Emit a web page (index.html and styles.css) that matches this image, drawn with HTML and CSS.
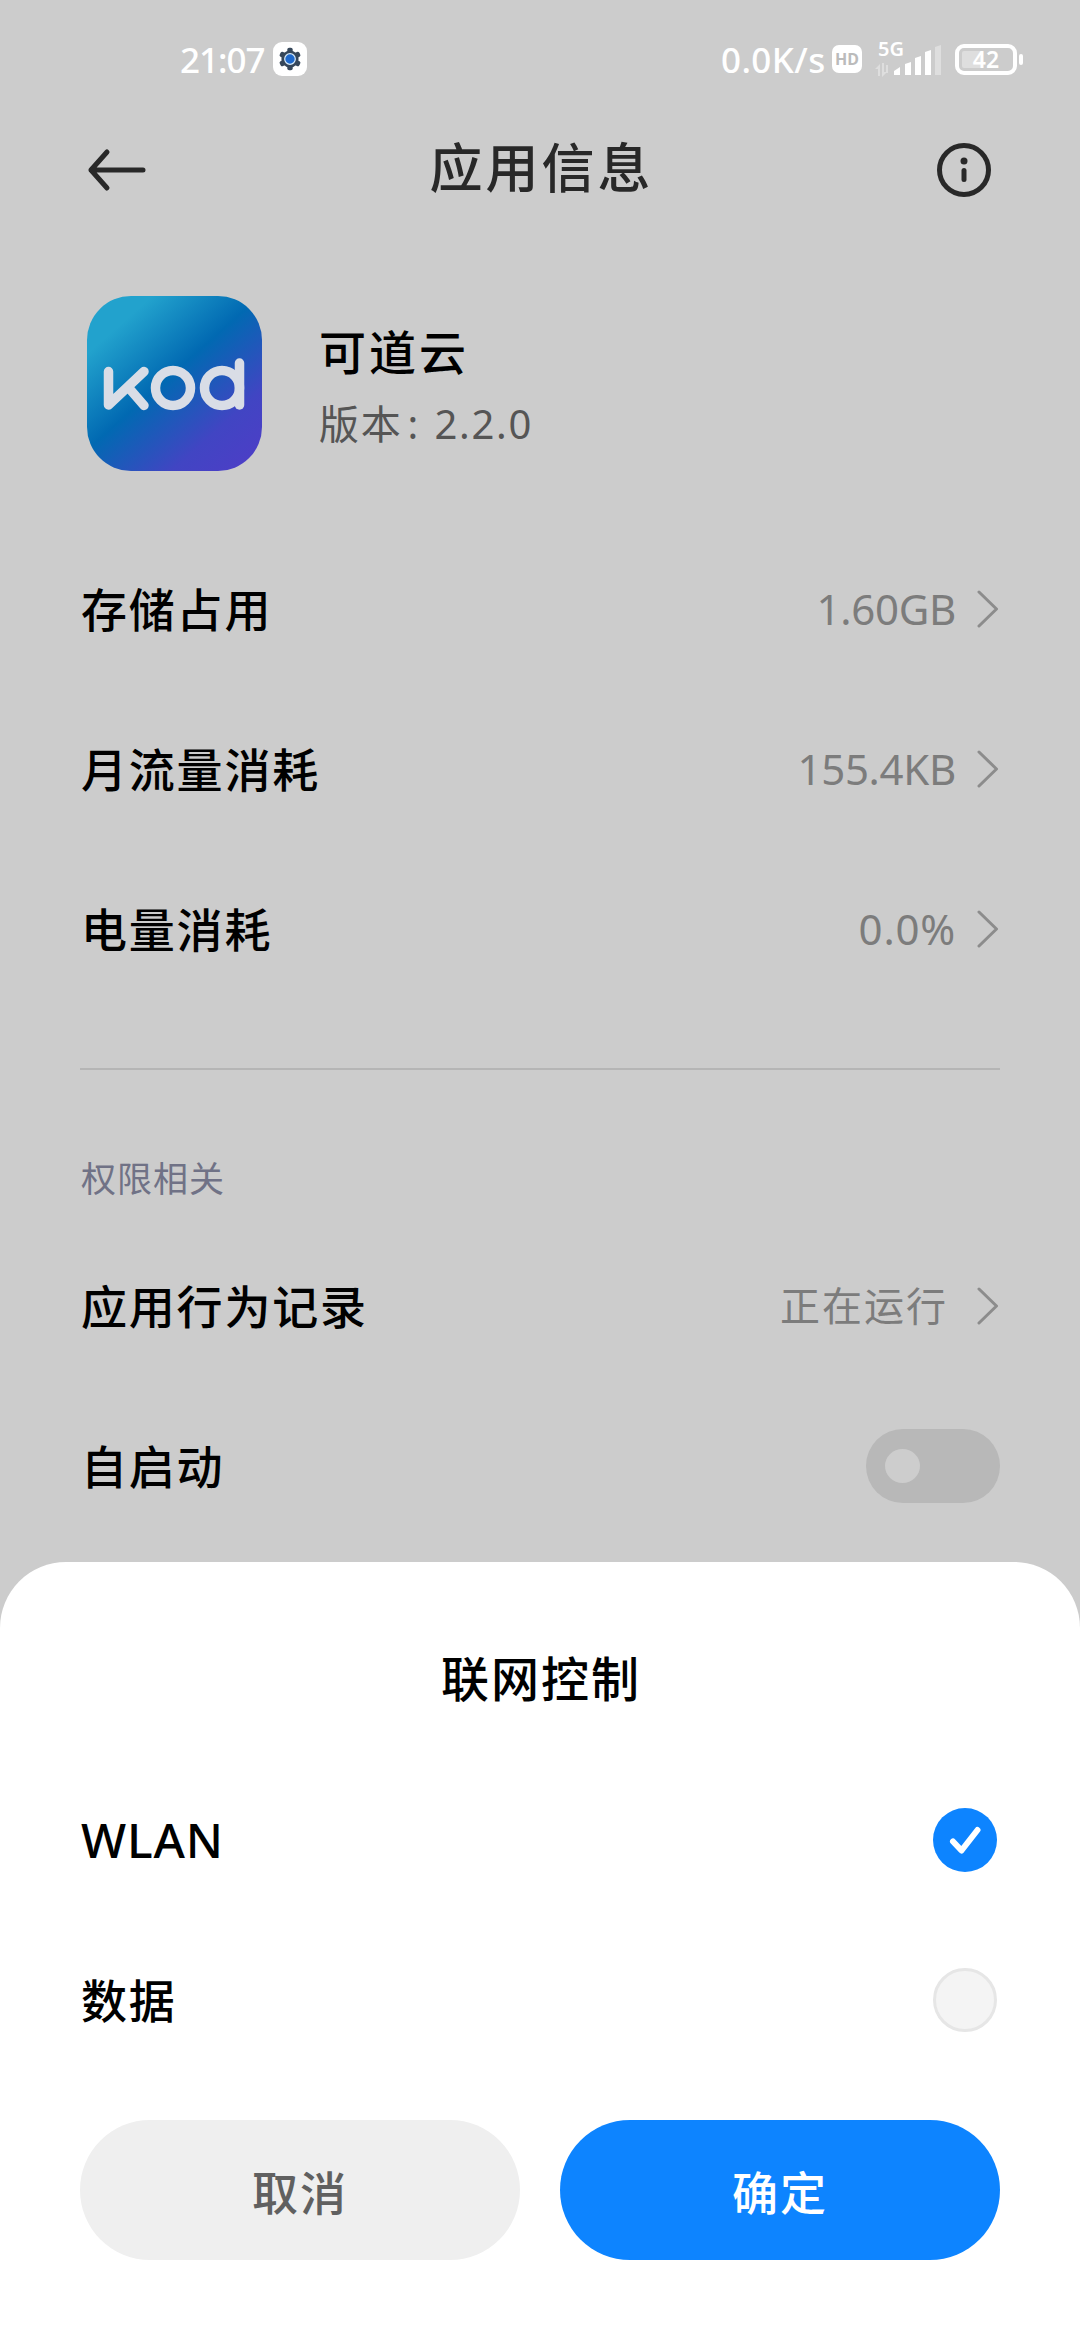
FILE: index.html
```html
<!DOCTYPE html>
<html lang="zh-CN">
<head>
<meta charset="utf-8">
<title>应用信息</title>
<link rel="stylesheet" href="styles.css">
</head>
<body>
<div class="screen">
  <header class="status">
    <div class="status-left">
      <span class="clock">21:07</span>
      <svg class="gear" viewBox="0 0 34 34">
        <rect width="34" height="34" rx="9" fill="#fff"/>
        <g fill="#36475a">
          <circle cx="17" cy="17" r="8.6"/>
          <rect x="14.3" y="5.8" width="5.4" height="22.4" rx="1.8"/>
          <rect x="14.3" y="5.8" width="5.4" height="22.4" rx="1.8" transform="rotate(60 17 17)"/>
          <rect x="14.3" y="5.8" width="5.4" height="22.4" rx="1.8" transform="rotate(120 17 17)"/>
        </g>
        <circle cx="17" cy="17" r="5.3" fill="#1f69cc" stroke="#d8ecfb" stroke-width="1.2"/>
      </svg>
    </div>
    <div class="status-right">
      <span class="speed">0.0K/s</span>
      <span class="hd">HD</span>
      <div class="signal">
        <span class="net">5G</span>
        <svg class="bars" viewBox="0 0 68 32">
          <g fill="#dedede"><path d="M1 24l5-5v12H4v-7zM8 18h2v9h3l-5 5zM12 20h2v8h-2z"/><path d="M61 2l6-2v30h-6z"/></g>
          <g fill="#fff"><path d="M20 30v-4l6-4v8zM31 30V19l6-2v13zM41 30V13l6-2v19zM51 30V7l6-2v25z"/></g>
        </svg>
      </div>
      <div class="battery"><span class="level">42</span></div>
      <span class="nub"></span>
    </div>
  </header>

  <nav class="titlebar">
    <svg class="back" viewBox="0 0 60 44"><path d="M56 22H4M20 4L4 22l16 18" fill="none" stroke="#282828" stroke-width="5" stroke-linecap="round" stroke-linejoin="round"/></svg>
    <h1 class="title">应用信息</h1>
    <svg class="info" viewBox="0 0 54 54"><circle cx="27" cy="27" r="24.5" fill="none" stroke="#282828" stroke-width="5"/><circle cx="27" cy="18" r="3.5" fill="#282828"/><path d="M27 27.500v9" stroke="#282828" stroke-width="5" stroke-linecap="round"/></svg>
  </nav>

  <section class="app">
    <svg class="logo" viewBox="0 0 175 175" role="img" aria-label="kod">
      <defs><linearGradient id="sky" x1="0.1" y1="0.05" x2="0.9" y2="0.95"><stop offset="0.12" stop-color="#22a2cd"/><stop offset="0.46" stop-color="#0169b2"/><stop offset="0.8" stop-color="#4145c3"/><stop offset="1" stop-color="#4b3fc6"/></linearGradient></defs>
      <rect width="175" height="175" rx="44" fill="url(#sky)"/>
      <g fill="none" stroke="#d9dde6" stroke-width="9.500" stroke-linecap="round" stroke-linejoin="round">
        <path d="M21.500 75.500V109L57 75.500M41 91L57 109.500"/>
        <circle cx="86" cy="92" r="17.500"/>
        <circle cx="135" cy="92" r="17.500"/>
        <path d="M152.500 67v42"/>
      </g>
    </svg>
    <div class="app-text">
      <div class="app-name">可道云</div>
      <div class="app-version"><span>版本</span><span class="colon">:</span><span>2.2.0</span></div>
    </div>
  </section>

  <section class="rows">
    <div class="row"><span class="label">存储占用</span><span class="value size">1.60GB</span><svg class="chevron" viewBox="0 0 22 38"><path d="M2 2l17.500 17L2 36"/></svg></div>
    <div class="row"><span class="label">月流量消耗</span><span class="value size">155.4KB</span><svg class="chevron" viewBox="0 0 22 38"><path d="M2 2l17.500 17L2 36"/></svg></div>
    <div class="row"><span class="label">电量消耗</span><span class="value size percent">0.0%</span><svg class="chevron" viewBox="0 0 22 38"><path d="M2 2l17.500 17L2 36"/></svg></div>
  </section>

  <section class="rows permissions">
    <h2 class="group">权限相关</h2>
    <div class="row"><span class="label">应用行为记录</span><span class="value state">正在运行</span><svg class="chevron" viewBox="0 0 22 38"><path d="M2 2l17.500 17L2 36"/></svg></div>
    <div class="row"><span class="label">自启动</span><span class="toggle"><span class="knob"></span></span></div>
  </section>

  <section class="sheet">
    <h2 class="sheet-title">联网控制</h2>
    <div class="option"><span class="label wlan">WLAN</span><svg class="check" viewBox="0 0 64 64"><circle cx="32" cy="32" r="32" fill="#0d84ff"/><path d="M20 33.500l8.500 9L44.500 22" fill="none" stroke="#fff" stroke-width="6" stroke-linecap="round" stroke-linejoin="round"/></svg></div>
    <div class="option"><span class="label">数据</span><span class="check empty"></span></div>
    <div class="actions">
      <button class="btn cancel">取消</button>
      <button class="btn ok">确定</button>
    </div>
  </section>
</div>
</body>
</html>
```
FILE: styles.css
```css
* { box-sizing: border-box; margin: 0; padding: 0; }
body {
  width: 1080px;
  height: 2340px;
  overflow: hidden;
  background: #ccc;
  font-family: "Noto Sans", "Noto Sans CJK SC", sans-serif;
  color: #000;
}
svg { display: block; flex: none; }
.screen { height: 2340px; display: flex; flex-direction: column; white-space: nowrap; }

.status { height: 120px; display: flex; justify-content: space-between; padding: 0 57px 0 180px; color: #fff; }
.status-left, .status-right { height: 118px; display: flex; align-items: center; }
.clock { font-size: 35px; font-weight: 500; letter-spacing: -1px; width: 93px; }
.gear { width: 34px; height: 34px; }
.speed { font-size: 35px; font-weight: 500; letter-spacing: 0.4px; width: 111px; }
.hd { width: 30px; height: 28px; border-radius: 7px; background: #fff; color: #bbb; font: 700 16px/28px "Noto Sans", sans-serif; text-align: center; }
.signal { width: 68px; height: 36px; margin-left: 12px; display: grid; }
.net, .bars { grid-area: 1 / 1; }
.net { font-size: 20px; font-weight: 600; line-height: 20px; padding-left: 4px; margin-top: -2px; }
.bars { width: 68px; height: 32px; align-self: end; }
.battery { width: 62px; height: 31px; margin-left: 13px; padding: 3px; border: 4px solid #fff; border-radius: 9px; display: flex; align-items: center; justify-content: center; background: linear-gradient(90deg, #dedede 44%, transparent 44%) content-box; }
.level { font-size: 23px; font-weight: 600; line-height: 22px; }
.nub { width: 4px; height: 11px; margin-left: 2px; border-radius: 3px; background: #fff; }

.titlebar { height: 100px; display: flex; align-items: center; justify-content: space-between; padding: 0 89px 0 87px; }
.back { width: 60px; height: 44px; }
.title { font-size: 53px; font-weight: 500; line-height: 80px; letter-spacing: 3px; color: #282828; margin: -4px 0 0 -1px; }
.info { width: 54px; height: 54px; }

.app { height: 330px; display: flex; padding: 76px 87px 0; }
.logo { width: 175px; height: 175px; }
.app-text { margin-left: 57px; padding-top: 20px; }
.app-name { font-size: 47px; font-weight: 500; line-height: 72px; letter-spacing: 3px; }
.app-version { font-size: 40px; line-height: 72px; letter-spacing: 1.7px; color: #555; display: flex; }
.colon { width: 32px; padding-left: 5px; }

.rows { height: 520px; padding: 0 80px; border: 0 solid #b5b5b5; }
.row, .option { height: 160px; display: flex; align-items: center; }
.rows .row:first-child { margin-top: -21px; }
.label { flex: 1; font-size: 46px; font-weight: 500; line-height: 70px; letter-spacing: 1.8px; padding-left: 1px; }
.wlan { font-size: 48px; letter-spacing: 0.8px; }
.value { font-size: 42px; color: #7c7c7c; line-height: 64px; }
.size { margin-right: 21px; letter-spacing: -0.3px; }
.percent { letter-spacing: 0.8px; }
.state { font-size: 40px; letter-spacing: 2px; margin-right: 29px; }
.chevron { width: 22px; height: 38px; margin-right: 1px; fill: none; stroke: #8c8c8c; stroke-width: 3; stroke-linecap: round; stroke-linejoin: round; }

.permissions { height: 494px; margin: 0 80px; padding: 0; margin-top: -2px; border-top-width: 2px; }
.group { font-size: 35px; font-weight: 400; line-height: 52px; letter-spacing: 1px; color: #707286; margin: 83px 0 21px 1px; }
.toggle { width: 134px; height: 74px; border-radius: 37px; background: #b8b8b8; padding: 20px 19px; }
.knob { display: block; width: 35px; height: 34px; border-radius: 50%; background: #cdcdcd; }

.sheet { flex: 1; background: #fff; border-radius: 66px 66px 0 0; padding: 81px 80px 0; }
.sheet-title { font-size: 48px; font-weight: 500; line-height: 72px; letter-spacing: 2px; text-align: center; margin-bottom: 45px; padding-left: 2px; }
.check { width: 64px; height: 64px; margin-right: 3px; }
.empty { border: 3px solid #e6e6e6; border-radius: 50%; background: #f4f4f4; }
.actions { display: flex; gap: 40px; margin-top: 40px; }
.btn { flex: 1; height: 140px; border: 0; border-radius: 70px; font: 500 46px/70px "Noto Sans CJK SC", sans-serif; letter-spacing: 2px; }
.cancel { background: #efefef; color: #606060; }
.ok { background: #0d84ff; color: #fff; }
```
